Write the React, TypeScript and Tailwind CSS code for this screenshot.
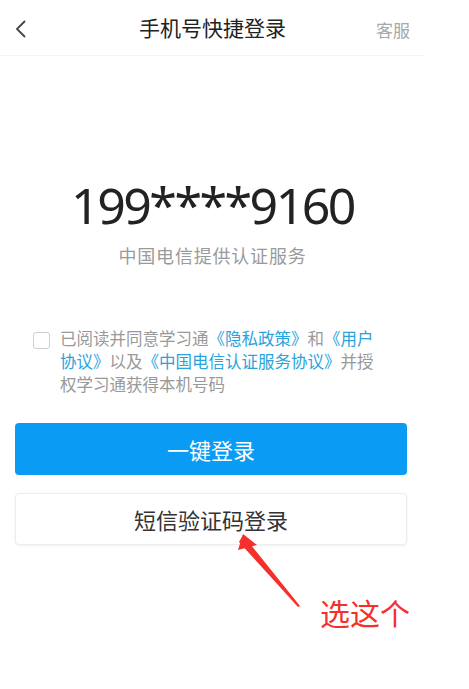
import React from "react";

const cjk = { fontFamily: '"Noto Sans CJK SC", "Noto Sans", sans-serif' };

function Annotation(): React.ReactElement {
    return (
        <>
            <svg
                className="absolute left-[230px] top-[528px]"
                width="80"
                height="85"
                viewBox="0 0 80 85"
            >
                <path d="M13 7 L70 78 L68 79 L9 14 Z" fill="#f5302a" />
                <path d="M13 6 L27 17 L8 22 Z" fill="#f5302a" />
            </svg>
            <span
                className="absolute left-[320px] top-[597px] text-[30px] text-[#f5302a] leading-none"
                style={cjk}
            >
                选这个
            </span>
        </>
    );
}

export default function App(): React.ReactElement {
    return (
        <div className="relative w-[469px] h-[689px] bg-white overflow-hidden" style={cjk}>
            <div className="w-[425px]">
                <div className="relative h-[56px] flex items-center justify-center border-b border-[#f4f4f4]">
                    <svg
                        className="absolute left-[14px] top-[19px]"
                        width="14"
                        height="20"
                        viewBox="0 0 14 20"
                    >
                        <path d="M11 2 L3 10 L11 18" fill="none" stroke="#444" strokeWidth="1.8" />
                    </svg>
                    <span className="text-[21px] text-[#222]">手机号快捷登录</span>
                    <span className="absolute left-[376px] top-[17px] text-[17px] text-[#a8a8a8]">客服</span>
                </div>

                <div className="flex flex-col items-center pt-[124px]">
                    <div
                        className="text-[50px] leading-none text-[#222] tracking-[-2.5px]"
                        style={{ fontFamily: '"Noto Sans", sans-serif' }}
                    >
                        199****9160
                    </div>
                    <div className="mt-[12px] text-[18px] text-[#9a9a9a] tracking-[0.8px]">
                        中国电信提供认证服务
                    </div>
                </div>

                <div className="flex items-start mt-[58px] pl-[33px]">
                    <div className="mt-[5px] w-[17px] h-[17px] rounded-[3px] border border-[#cfcfcf] shrink-0" />
                    <p className="ml-[10px] w-[318px] text-[16.5px] leading-[23px] text-[#999]">
                        已阅读并同意学习通<span className="text-[#2aa3dc]">《隐私政策》</span>和
                        <span className="text-[#2aa3dc]">《用户协议》</span>以及
                        <span className="text-[#2aa3dc]">《中国电信认证服务协议》</span>并授权学习通获得本机号码
                    </p>
                </div>

                <div className="pl-[15px] pr-[18px] mt-[27px] flex flex-col gap-[18px]">
                    <button className="h-[52px] w-full rounded-[4px] bg-[#0a9cf5] text-white text-[22px]">
                        一键登录
                    </button>
                    <button className="h-[52px] w-full rounded-[4px] bg-white border border-[#ededed] shadow-[0_1px_3px_rgba(0,0,0,0.06)] text-[#333] text-[22px]">
                        短信验证码登录
                    </button>
                </div>
            </div>
            <Annotation />
        </div>
    );
}
